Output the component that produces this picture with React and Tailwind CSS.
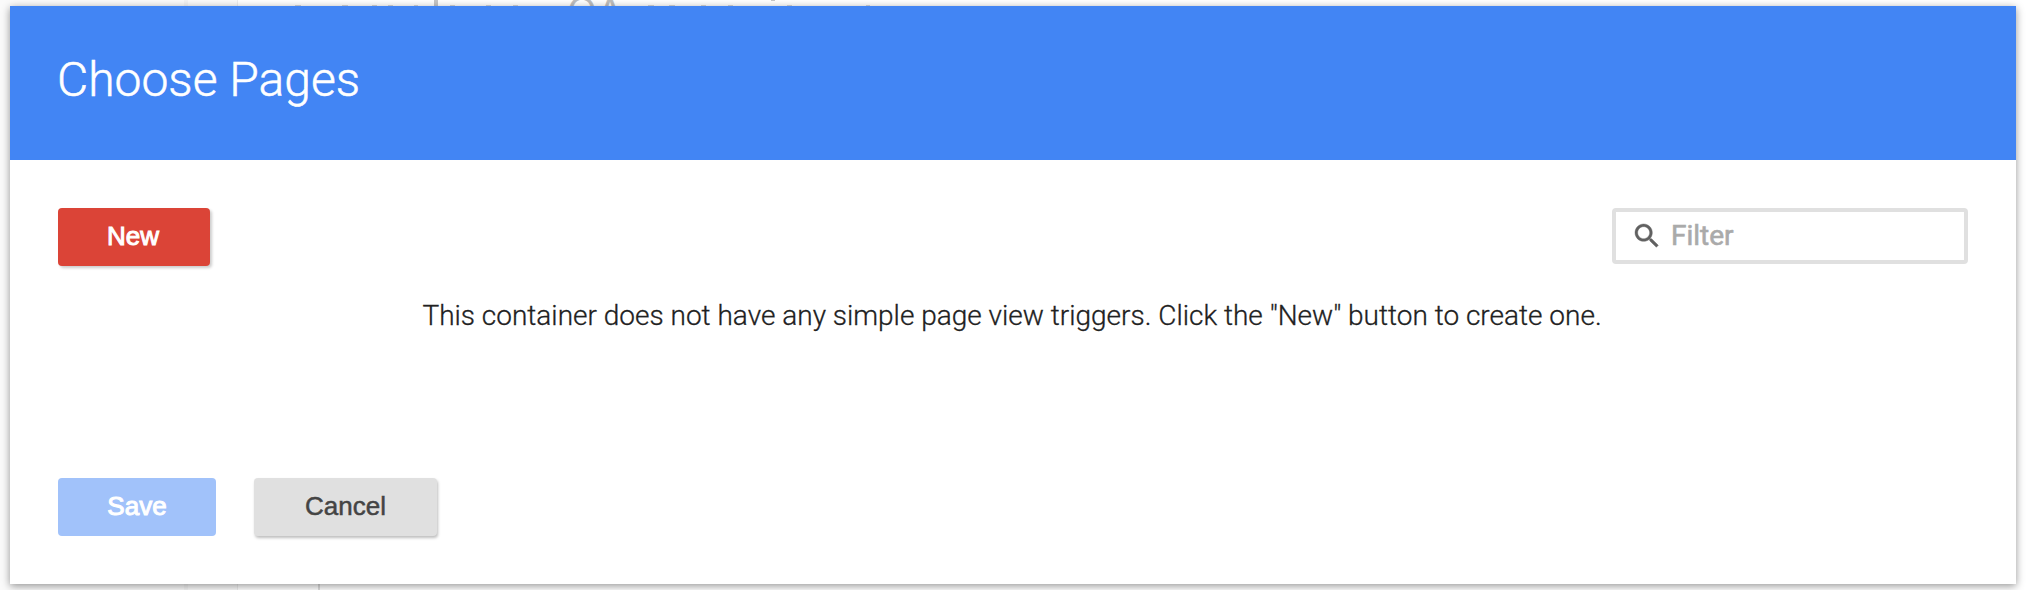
const tops = [
  [298, 6], [345, 6], [374, 5], [390, 5], [416, 4], [452, 5], [488, 5], [515, 5],
  [651, 6], [672, 6], [703, 5], [730, 5], [789, 5], [868, 4],
];

function Backdrop() {
  return (
    <div className="absolute inset-0 flex overflow-hidden font-[Roboto,sans-serif]" aria-hidden="true">
      <div className="w-[184px] bg-[#fafafa]" />
      <div className="w-1 bg-[#f3f3f3]" />
      <div className="w-[49px] bg-[#fafafa]" />
      <div className="w-px bg-[#ededed]" />
      <div className="flex-1 bg-white" />
      <div className="absolute left-[434px] top-0 h-2 w-[4px] bg-[#c6c6c6]" />
      <div className="absolute left-[318px] bottom-0 h-2 w-[2px] bg-[#dddddd]" />
      <div className="absolute left-[567px] top-[-12px] text-[44px] leading-[52px] font-light text-[#bdbdbd] [-webkit-text-stroke:0.8px_#bdbdbd]">OA</div>
      <div className="absolute left-[771px] top-0 h-px w-[4px] bg-[#c8c8c8]" />
      {tops.map(([x, w]) => (
        <div key={x} className="absolute top-[5px] h-px bg-[#d8d8d8]" style={{ left: x - w / 2, width: w }} />
      ))}
    </div>
  );
}

export default function App() {
  return (
    <div className="relative h-[590px] w-[2032px] overflow-hidden bg-white pt-[6px] pl-[10px]">
      <Backdrop />
      <section className="relative flex h-[578px] w-[2006px] flex-col bg-white font-[Roboto,sans-serif] shadow-[0_2px_8px_rgba(0,0,0,0.42)]">
        <header className="h-[154px] bg-[#4285f4] pt-11 pl-[47px]">
          <h1 className="text-[48px] leading-[60px] font-light whitespace-nowrap text-white [-webkit-text-stroke:0.5px_white]">Choose Pages</h1>
        </header>
        <div className="flex items-start justify-between px-12 pt-12">
          <button className="h-[58px] w-[152px] rounded-[4px] bg-[#db4437] pr-[2px] pb-px font-['Liberation_Sans',Arial,sans-serif] text-[26px] text-white shadow-[2px_2px_3px_rgba(0,0,0,0.2)] [-webkit-text-stroke:1px_white]">New</button>
          <label className="flex h-14 w-[356px] items-center rounded-[4px] border-4 border-[#e0e0e0] pl-[15px]">
            <svg className="size-[32px]" viewBox="0 0 24 24" fill="#616161" stroke="#616161" strokeWidth="0.3">
              <path d="M15.5 14h-.79l-.28-.27C15.41 12.59 16 11.11 16 9.5 16 5.91 13.09 3 9.5 3S3 5.91 3 9.5 5.91 16 9.5 16c1.61 0 3.09-.59 4.23-1.57l.27.28v.79l5 4.99L20.49 19l-4.99-5zm-6 0C7.01 14 5 11.99 5 9.5S7.01 5 9.5 5 14 7.01 14 9.5 11.99 14 9.5 14z" />
            </svg>
            <span className="ml-2 text-[28px] leading-8 text-[#aaaaaa] [-webkit-text-stroke:0.6px_#aaaaaa]">Filter</span>
          </label>
        </div>
        <p className="mt-[34px] pr-[2px] text-center text-[28px] leading-8 font-light whitespace-nowrap text-[#212121] [-webkit-text-stroke:0.3px_#212121]">
          This container does not have any simple page view triggers. Click the "New" button to create one.
        </p>
        <footer className="mt-auto flex gap-[38px] px-12 pb-12 font-['Liberation_Sans',Arial,sans-serif] text-[26px]">
          <button className="h-[58px] w-[158px] rounded-[4px] bg-[#a1c2fa] pb-px text-white [-webkit-text-stroke:1px_white]">Save</button>
          <button className="h-[58px] w-[183px] rounded-[4px] bg-[#e0e0e0] pb-px text-[#444444] shadow-[1px_2px_3px_rgba(0,0,0,0.26)] [-webkit-text-stroke:0.5px_#444444]">Cancel</button>
        </footer>
      </section>
    </div>
  );
}
